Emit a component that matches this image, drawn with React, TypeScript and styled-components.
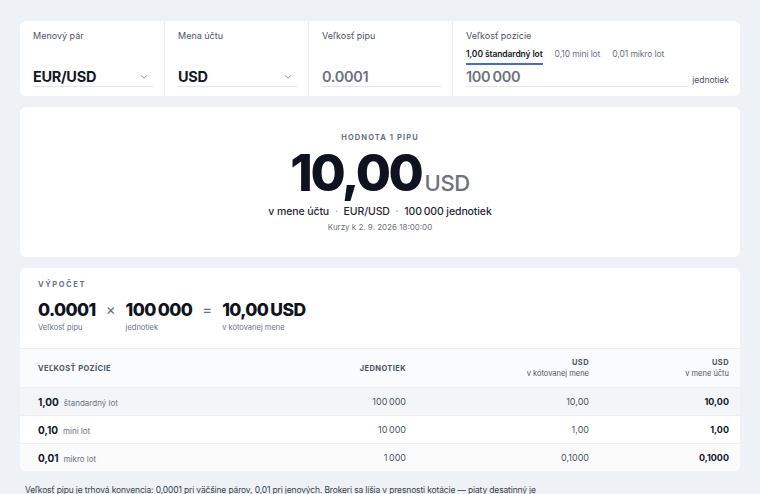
import styled, { createGlobalStyle } from 'styled-components';
import { ChevronDown } from 'lucide-react';

const GlobalStyle = createGlobalStyle`
  body {
    margin: 0;
    background: #eef1f5;
    font-family: Inter, "Noto Sans", "Liberation Sans", sans-serif;
    color: #111827;
  }
`;

interface LotRow {
  lots: string;
  name: string;
  units: string;
  quote: string;
  account: string;
  tone: 'active' | 'plain' | 'soft';
}

// thin space between thousands, like the sk-SK formatter
const sp = '\u2009';

const rows: LotRow[] = [
  { lots: '1,00', name: 'štandardný lot', units: `100${sp}000`, quote: '10,00', account: '10,00', tone: 'active' },
  { lots: '0,10', name: 'mini lot', units: `10${sp}000`, quote: '1,00', account: '1,00', tone: 'plain' },
  { lots: '0,01', name: 'mikro lot', units: `1${sp}000`, quote: '0,1000', account: '0,1000', tone: 'soft' },
];

const tabs = ['1,00 štandardný lot', '0,10 mini lot', '0,01 mikro lot'];

const App = () => {
  return (
    <Page>
      <GlobalStyle />
      <Inputs>
        <Field>
          <Label>Menový pár</Label>
          <Select>
            <Value>EUR/USD</Value>
            <ChevronDown size={10} color="#6b7280" strokeWidth={2} />
          </Select>
        </Field>
        <Field>
          <Label>Mena účtu</Label>
          <Select>
            <Value>USD</Value>
            <ChevronDown size={10} color="#6b7280" strokeWidth={2} />
          </Select>
        </Field>
        <Field>
          <Label>Veľkosť pipu</Label>
          <Select>
            <Value muted>0.0001</Value>
          </Select>
        </Field>
        <Field>
          <Label>Veľkosť pozície</Label>
          <Tabs>
            {tabs.map((tab, i) => (
              <Tab key={tab} active={i === 0}>
                {tab}
              </Tab>
            ))}
          </Tabs>
          <UnitsRow>
            <Select grow>
              <Value muted>{`100${sp}000`}</Value>
            </Select>
            <Suffix>jednotiek</Suffix>
          </UnitsRow>
        </Field>
      </Inputs>

      <Result>
        <Eyebrow>Hodnota 1 pipu</Eyebrow>
        <Big>
          10,00<BigUnit>USD</BigUnit>
        </Big>
        <Meta>
          v mene účtu <Dot>·</Dot> EUR/USD <Dot>·</Dot> {`100${sp}000`} jednotiek
        </Meta>
        <Stamp>Kurzy k 2. 9. 2026 18:00:00</Stamp>
      </Result>

      <Calc>
        <CalcHead>
          <Eyebrow left>Výpočet</Eyebrow>
          <Formula>
            <Term>
              <TermValue>0.0001</TermValue>
              <TermLabel>Veľkosť pipu</TermLabel>
            </Term>
            <Op>×</Op>
            <Term>
              <TermValue>{`100${sp}000`}</TermValue>
              <TermLabel>jednotiek</TermLabel>
            </Term>
            <Op>=</Op>
            <Term>
              <TermValue>{`10,00${sp}USD`}</TermValue>
              <TermLabel>v kótovanej mene</TermLabel>
            </Term>
          </Formula>
        </CalcHead>

        <HeadRow>
          <HeadCell>Veľkosť pozície</HeadCell>
          <HeadCell right>Jednotiek</HeadCell>
          <HeadCell right>
            USD
            <HeadSub>v kótovanej mene</HeadSub>
          </HeadCell>
          <HeadCell right>
            USD
            <HeadSub>v mene účtu</HeadSub>
          </HeadCell>
        </HeadRow>
        {rows.map((row) => (
          <Row key={row.lots} tone={row.tone}>
            <LotCell>
              <b>{row.lots}</b>
              <span>{row.name}</span>
            </LotCell>
            <Cell>{row.units}</Cell>
            <Cell>{row.quote}</Cell>
            <Cell strong>{row.account}</Cell>
          </Row>
        ))}
      </Calc>

      <Note>
        Veľkosť pipu je trhová konvencia: 0,0001 pri väčšine párov, 0,01 pri jenových. Brokeri sa líšia v presnosti kotácie — piaty desatinný je
        takzvaná pipeta.
      </Note>
    </Page>
  );
};

export default App;

const Page = styled.div`
  padding: 21px 20px 0;
  display: flex;
  flex-direction: column;
  gap: 11px;
  height: 494px;
  box-sizing: border-box;
  overflow: hidden;
`;

const Card = styled.div`
  background: #ffffff;
  border-radius: 6px;
  flex: none;
`;

const Inputs = styled(Card)`
  display: grid;
  grid-template-columns: 144px 144px 144px 1fr;
  height: 75px;
`;

const Field = styled.div`
  padding: 9px 11px 0 13px;
  display: flex;
  flex-direction: column;
  & + & {
    border-left: 1px solid #eceef2;
  }
`;

const Label = styled.div`
  font-size: 9px;
  color: #4b5563;
  line-height: 12px;
`;

const Select = styled.div<{ grow?: boolean }>`
  margin-top: auto;
  margin-bottom: 9px;
  height: 22px;
  display: flex;
  align-items: center;
  justify-content: space-between;
  padding: 2px 4px 0 0;
  box-sizing: border-box;
  border-bottom: 1px solid #e3e6eb;
  flex: ${({ grow }) => (grow ? 1 : 'none')};
`;

const Value = styled.span<{ muted?: boolean }>`
  font-size: 14.5px;
  font-weight: ${({ muted }) => (muted ? 600 : 700)};
  color: ${({ muted }) => (muted ? '#6b7280' : '#111827')};
  letter-spacing: -0.3px;
`;

const Tabs = styled.div`
  display: flex;
  gap: 12px;
  margin-top: 6px;
`;

const Tab = styled.span<{ active?: boolean }>`
  font-size: 8.5px;
  line-height: 12px;
  padding-bottom: 3px;
  letter-spacing: -0.1px;
  color: ${({ active }) => (active ? '#111827' : '#6b7280')};
  font-weight: ${({ active }) => (active ? 600 : 400)};
  border-bottom: 2px solid ${({ active }) => (active ? '#3b6fd6' : 'transparent')};
`;

const UnitsRow = styled.div`
  margin-top: auto;
  display: flex;
  align-items: flex-end;
  gap: 4px;
`;

const Suffix = styled.span`
  font-size: 8.5px;
  color: #4b5563;
  margin-bottom: 11px;
`;

const Result = styled(Card)`
  height: 150px;
  box-sizing: border-box;
  padding-top: 26px;
  display: flex;
  flex-direction: column;
  align-items: center;
`;

const Eyebrow = styled.div<{ left?: boolean }>`
  font-size: 7.5px;
  font-weight: 700;
  letter-spacing: ${({ left }) => (left ? '1.6px' : '1.1px')};
  text-transform: uppercase;
  color: #6b7280;
  line-height: 10px;
  align-self: ${({ left }) => (left ? 'flex-start' : 'center')};
`;

const Big = styled.div`
  margin-top: 10px;
  font-size: 51px;
  font-weight: 800;
  letter-spacing: -2.4px;
  line-height: 40px;
  color: #0f1320;
  display: flex;
  align-items: baseline;
`;

const BigUnit = styled.span`
  font-size: 22px;
  font-weight: 500;
  letter-spacing: -0.4px;
  color: #6b7280;
  margin-left: 3px;
`;

const Meta = styled.div`
  margin-top: 2px;
  font-size: 10.5px;
  color: #1f2937;
  font-weight: 500;
  letter-spacing: -0.1px;
`;

const Dot = styled.span`
  color: #9ca3af;
  margin: 0 3px;
`;

const Stamp = styled.div`
  margin-top: 4px;
  font-size: 8px;
  color: #6b7280;
`;

const Calc = styled(Card)`
  overflow: hidden;
`;

const CalcHead = styled.div`
  padding: 12px 18px 16px;
  border-bottom: 1px solid #eceef2;
`;

const Formula = styled.div`
  margin-top: 9px;
  display: flex;
  align-items: flex-start;
  gap: 10px;
`;

const Term = styled.div`
  display: flex;
  flex-direction: column;
  gap: 2px;
`;

const TermValue = styled.span`
  font-size: 17.5px;
  font-weight: 800;
  letter-spacing: -0.6px;
  line-height: 22px;
  color: #0f1320;
`;

const TermLabel = styled.span`
  font-size: 7.5px;
  color: #6b7280;
`;

const Op = styled.span`
  font-size: 15px;
  line-height: 22px;
  color: #6b7280;
`;

const Grid = styled.div`
  display: grid;
  grid-template-columns: 1fr 130px 183px 140px;
  padding: 0 11px 0 18px;
  align-items: center;
`;

const HeadRow = styled(Grid)`
  height: 38px;
  background: #fafbfc;
  border-bottom: 1px solid #eceef2;
`;

const HeadCell = styled.div<{ right?: boolean }>`
  font-size: 7.5px;
  font-weight: 700;
  letter-spacing: 0.4px;
  text-transform: uppercase;
  color: #4b5563;
  text-align: ${({ right }) => (right ? 'right' : 'left')};
  line-height: 11px;
`;

const HeadSub = styled.div`
  text-transform: none;
  font-weight: 400;
  letter-spacing: 0;
  color: #4b5563;
`;

const Row = styled(Grid)<{ tone: LotRow['tone'] }>`
  height: 27px;
  background: ${({ tone }) =>
    tone === 'active' ? '#f3f5f8' : tone === 'soft' ? '#fbfbfc' : '#ffffff'};
  & + & {
    border-top: 1px solid #eceef2;
  }
`;

const LotCell = styled.div`
  display: flex;
  align-items: baseline;
  gap: 5px;
  b {
    font-size: 10px;
    font-weight: 700;
    color: #111827;
  }
  span {
    font-size: 8px;
    color: #6b7280;
  }
`;

const Cell = styled.div<{ strong?: boolean }>`
  text-align: right;
  font-size: 9px;
  font-weight: ${({ strong }) => (strong ? 700 : 400)};
  color: ${({ strong }) => (strong ? '#111827' : '#4b5563')};
`;

const Note = styled.p`
  margin: 1px 0 0 5px;
  max-width: 520px;
  font-size: 8.5px;
  line-height: 14px;
  letter-spacing: -0.15px;
  color: #374151;
`;
